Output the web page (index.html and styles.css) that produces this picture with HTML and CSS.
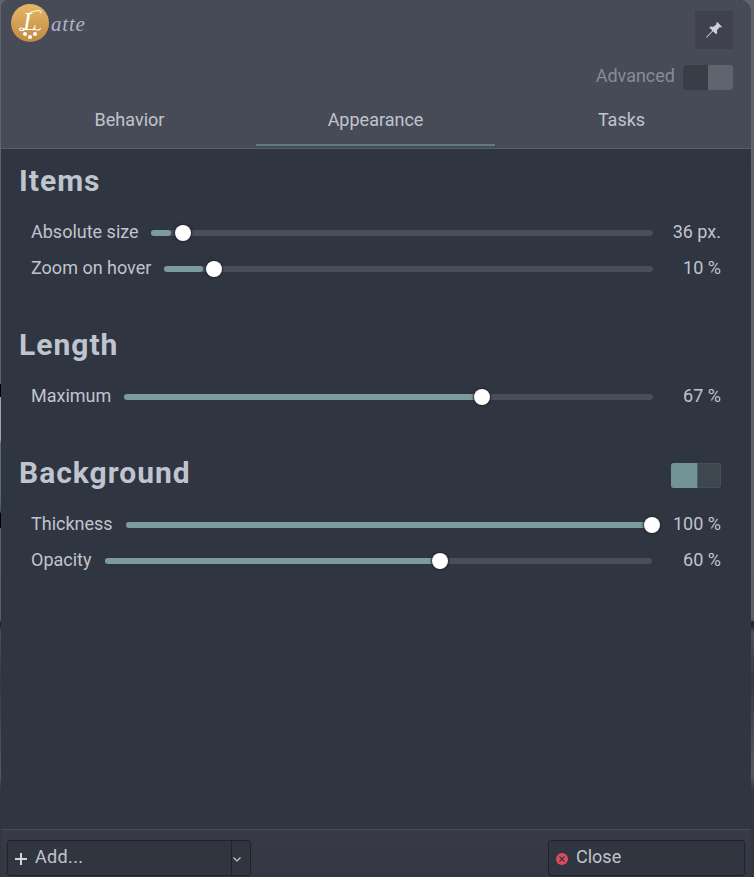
FILE: index.html
```html
<!DOCTYPE html>
<html lang="en">
<head>
<meta charset="utf-8">
<title>Latte</title>
<link rel="stylesheet" href="styles.css">
</head>
<body>
<main class="window">
  <header class="header">
    <div class="topbar">
      <div class="brand">
        <svg class="logo" viewBox="0 0 38 38" role="img" aria-label="Latte logo">
          <defs><linearGradient id="gold" x1="0" y1="0" x2="0" y2="1"><stop offset="0" stop-color="#e8b767"/><stop offset="1" stop-color="#c08a41"/></linearGradient></defs>
          <circle cx="19" cy="19" r="19" fill="url(#gold)"/>
          <text class="logo-letter" x="12" y="26">L</text>
          <g fill="none" stroke="#fff" stroke-linecap="round">
            <path stroke-width="1" d="M17.5 14C14.5 10 21 6.3 29 6.8Q31 7.2 30 9"/>
            <path stroke-width="1.1" d="M14 25.3C9 22.5 7.5 25 9 26.2C10.5 27.2 12.5 26.2 14 25.4M24 25.5Q28 27 29.5 24.5"/>
          </g>
          <g fill="#fff"><circle cx="14" cy="30" r="2"/><circle cx="19" cy="33" r="2"/><circle cx="24" cy="30" r="2"/></g>
        </svg>
        <span class="brand-name">atte</span>
      </div>
      <button class="pin" aria-label="Pin">
        <svg viewBox="0 0 18 18" width="18" height="18"><path fill="#cbd0dc" d="M12.2 1 17 5.7 16.1 6.6 14.8 6 11.9 9.2 12.2 12.2 11.1 13.3 8 10.2 1.6 16.8 1 16.3 7.4 9.6 4.3 6.5 5.4 5.5 8.5 5.8 11.7 3 11.2 1.9Z"/></svg>
      </button>
    </div>
    <div class="advanced"><span>Advanced</span><span class="switch switch-off"></span></div>
    <nav class="tabs">
      <a class="tab tab-behavior">Behavior</a>
      <a class="tab tab-active">Appearance</a>
      <a class="tab tab-tasks">Tasks</a>
    </nav>
  </header>
  <section class="content">
    <section class="group">
      <div class="group-head"><h2>Items</h2></div>
      <div class="row"><span class="label size">Absolute size</span><div class="track"><i class="fill" style="width:20px"></i><b class="knob" style="left:31.5px"></b></div><span class="value">36 px.</span></div>
      <div class="row"><span class="label zoom">Zoom on hover</span><div class="track"><i class="fill" style="width:39px"></i><b class="knob" style="left:50px"></b></div><span class="value">10 %</span></div>
    </section>
    <section class="group">
      <div class="group-head"><h2>Length</h2></div>
      <div class="row"><span class="label maximum">Maximum</span><div class="track"><i class="fill" style="width:358px"></i><b class="knob" style="left:358px"></b></div><span class="value">67 %</span></div>
    </section>
    <section class="group">
      <div class="group-head"><h2>Background</h2><span class="switch switch-on"></span></div>
      <div class="row"><span class="label thickness">Thickness</span><div class="track"><i class="fill" style="width:526px"></i><b class="knob" style="left:526px"></b></div><span class="value">100 %</span></div>
      <div class="row row-opacity"><span class="label opacity">Opacity</span><div class="track"><i class="fill" style="width:335px"></i><b class="knob" style="left:335px"></b></div><span class="value">60 %</span></div>
    </section>
  </section>
  <footer class="footer">
    <div class="add">
      <button class="add-main"><svg width="12" height="12" viewBox="0 0 12 12"><path d="M6 0V12M0 6H12" stroke="#d0d4df" stroke-width="2"/></svg><span class="add-text">Add...</span></button>
      <button class="add-menu" aria-label="More"><svg width="8" height="5" viewBox="0 0 8 5"><path d="M.5.5 4 4 7.5.5" fill="none" stroke="#c5c9d4" stroke-width="1.2"/></svg></button>
    </div>
    <button class="close"><svg width="12" height="12" viewBox="0 0 12 12"><circle cx="6" cy="6" r="6" fill="#db4b5d"/><path d="M3.5 3.5 8.5 8.5M8.5 3.5 3.5 8.5" stroke="#3b3444" stroke-width="1.2"/></svg><span>Close</span></button>
  </footer>
</main>
</body>
</html>
```
FILE: styles.css
```css
* { box-sizing: border-box; }
body {
  margin: 0;
  height: 877px;
  overflow: hidden;
  padding: 0 3px 0 1px;
  font: 18px/24px Roboto, sans-serif;
  color: #c0c4ce;
  background:
    linear-gradient(#000 0 13px, #9aa3a8 13px 55px, #596b78 60px 115px, #31526a 128px, #000 129px 144px) 0 384px / 1px 144px no-repeat,
    linear-gradient(#60646f 0, #5b5f6a 620px, #242733 622px 626px, #4c505c 632px, #353946 680px, #555964 775px, #343744 790px, #30343f 877px);
}
button { font: inherit; color: inherit; padding: 0; }
.window { height: 877px; display: flex; flex-direction: column; background: #2f3541; border-radius: 8px 12px 0 0; overflow: hidden; }
.header { height: 149px; background: #474b57; border-bottom: 1px solid #595e69; }
.topbar { display: flex; justify-content: space-between; height: 49px; padding: 4px 18px 0 10px; }
.brand { display: flex; height: 38px; }
.logo { width: 38px; height: 38px; overflow: visible; }
.logo-letter { font: italic 25px "Liberation Serif", serif; fill: #fff; }
.brand-name { margin: 8px 0 0 2px; font: italic 21px/24px "Liberation Serif", serif; letter-spacing: 0.8px; color: #b0b4c2; }
.pin { width: 38px; height: 38px; margin-top: 7px; display: grid; place-items: center; border: 0; background: #3f424e; }
.advanced { height: 56px; display: flex; justify-content: flex-end; align-items: center; gap: 8px; padding: 0 18px 3px 0; color: #868b96; }
.switch { display: block; border-radius: 3px; overflow: hidden; }
.switch::before { content: ""; display: block; width: 25px; height: 25px; }
.switch-off { width: 50px; height: 25px; background: #60646f; }
.switch-off::before { background: #393d48; }
.switch-on { width: 50px; height: 25px; margin-top: 3px; background: #3e4750; box-shadow: inset 0 0 0 1px #425354; }
.switch-on::before { width: 26px; background: #729496; border-right: 1px solid #4b6264; }
.advanced .switch { position: relative; top: 2px; }
.tabs { display: flex; height: 41px; padding: 0 10px 0 9px; gap: 7px; text-align: center; }
.tab { flex: 1; height: 41px; padding-top: 3px; }
.tab-active { border-bottom: 2px solid #637b80; }
.content { flex: 1; padding: 0 30px 0 18px; }
.group { margin-bottom: 26px; }
.group-head { height: 66px; display: flex; justify-content: space-between; align-items: center; }
h2 { margin: 0; padding-bottom: 3px; font-size: 30px; line-height: 36px; font-weight: 700; letter-spacing: 1px; }
.row { display: flex; align-items: center; height: 36px; padding-left: 12px; }
.label { flex: none; white-space: nowrap; padding-bottom: 3px; }
.size { width: 120px; }
.zoom { width: 133px; }
.maximum { width: 93px; }
.thickness { width: 95px; }
.opacity { width: 74px; }
.track { position: relative; flex: 1; height: 6px; border-radius: 3px; background: #4a4e5a; }
.fill { display: block; height: 6px; border-radius: 3px; background: #7b9c9d; }
.knob { position: absolute; top: -5px; width: 16px; height: 16px; margin-left: -8px; border-radius: 50%; background: #fff; box-shadow: 0 0 2px 1px #20242e; }
.value { width: 68px; text-align: right; padding-bottom: 3px; white-space: nowrap; }
.row-opacity .value { width: 69px; }
.footer { display: flex; justify-content: space-between; height: 48px; padding: 10px 6px 1px; border-top: 1px solid #484c58; background: linear-gradient(#383b47, #333742); }
.add { display: flex; width: 244px; }
.add-main, .add-menu, .close { display: flex; align-items: center; border: 1px solid #20232c; border-radius: 3px; background: #313540; }
.add-main { width: 225px; gap: 8px; padding-left: 7px; border-radius: 3px 0 0 3px; }
.add-text { letter-spacing: 0.35px; }
.add-menu { width: 20px; margin-left: -1px; justify-content: center; padding-right: 8px; border-radius: 0 3px 3px 0; }
.close { width: 197px; gap: 8px; padding-left: 7px; }
.footer span { padding-bottom: 3px; }
.footer svg { position: relative; top: 1px; }
```
